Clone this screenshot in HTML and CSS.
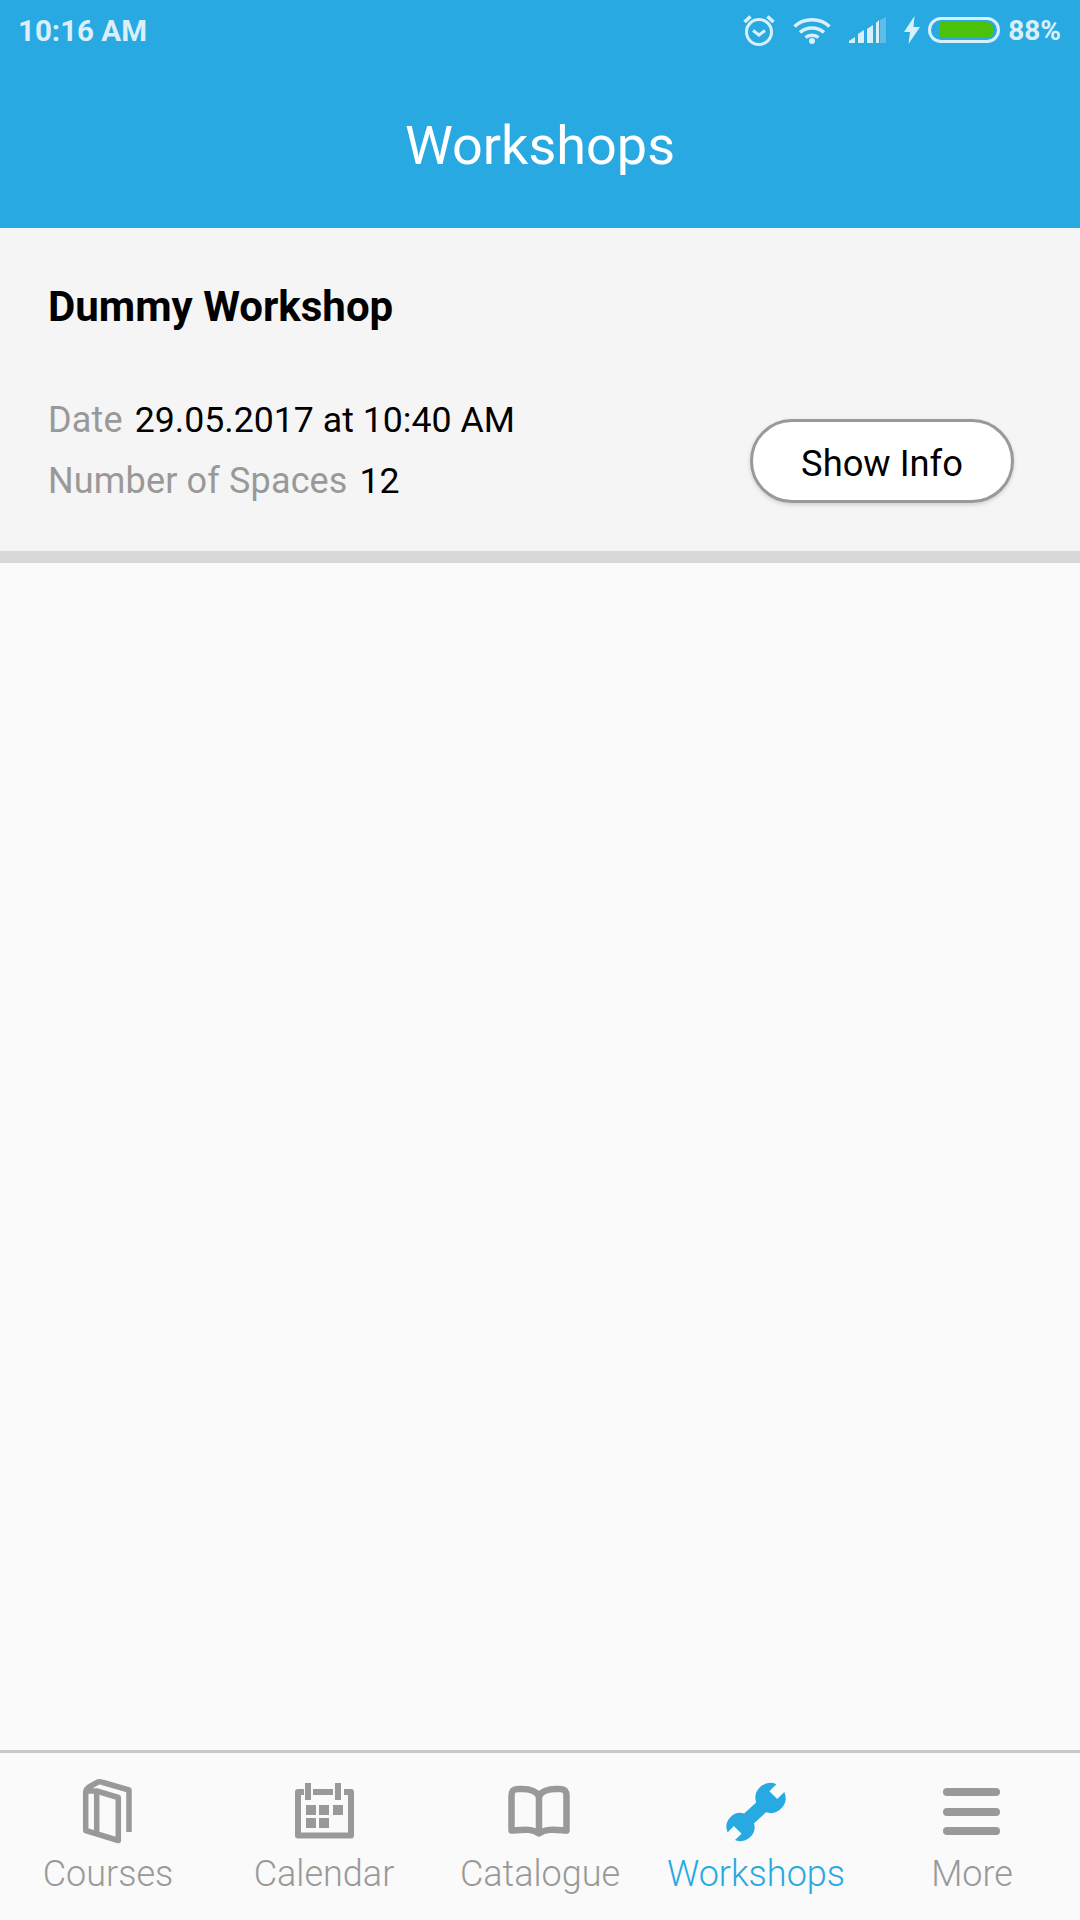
FILE: index.html
```html
<!DOCTYPE html>
<html lang="en">
<head>
    <meta charset="UTF-8">
    <meta name="viewport" content="width=device-width, initial-scale=1.0">
    <title>Workshops</title>
    <link rel="stylesheet" href="styles.css">
</head>
<body>
    <header class="app-header">
        <!-- status bar -->
        <div class="status-bar">
            <span class="status-time">10:16 AM</span>
            <div class="status-icons">
                <svg class="icon-alarm" viewBox="0 0 32 32" fill="none" stroke="#d9f0fb" stroke-width="3">
                    <circle cx="16" cy="18" r="12.5"/>
                    <path d="M10 16.500l6 4.500 6-4.500" stroke-width="3"/>
                    <path d="M1.500 8l6-5.500M30.500 8l-6-5.500" stroke-width="3.600"/>
                </svg>
                <svg class="icon-wifi" viewBox="0 0 38 27" fill="none" stroke="#d9f0fb" stroke-width="3.600">
                    <path d="M1.500 9.500C11 .5 27 .5 36.500 9.500"/>
                    <path d="M7 15.500c6.500-6 17.500-6 24 0"/>
                    <path d="M12.500 20.500c3.500-3 9.500-3 13 0"/>
                    <circle cx="19" cy="24" r="3" fill="#d9f0fb" stroke="none"/>
                </svg>
                <svg class="icon-signal" viewBox="0 0 37 26" fill="#d9f0fb">
                    <path d="M0 26v-2l6-4v6z"/>
                    <path d="M9 26v-9l6-4v13z"/>
                    <path d="M18 26V12l6-4v18z"/>
                    <path d="M27 26V6l3-3v23z"/>
                    <path d="M31 26V3l6-3v26z" opacity=".3"/>
                </svg>
                <svg class="icon-bolt" viewBox="0 0 16 28" fill="#d9f0fb">
                    <path d="M10.500 0L0 16h6L4.500 28 16 11H9.500z"/>
                </svg>
                <div class="battery"><div class="battery-fill"></div></div>
                <span class="status-percent">88%</span>
            </div>
        </div>
        <h1>Workshops</h1>
    </header>

    <main class="content">
        <section class="workshop-card">
            <h2>Dummy Workshop</h2>
            <div class="workshop-row">
                <div class="workshop-details">
                    <p><span class="detail-label">Date</span> <span class="detail-value">29.05.2017 at 10:40 AM</span></p>
                    <p><span class="detail-label">Number of Spaces</span> <span class="detail-value">12</span></p>
                </div>
                <button type="button" class="show-info">Show Info</button>
            </div>
        </section>
    </main>

    <!-- bottom tabs -->
    <nav class="tab-bar">
        <a class="tab" href="#">
            <svg viewBox="0 0 72 72" fill="none" stroke="currentColor" stroke-width="5.500" stroke-linejoin="round">
                <path d="M13.700 14Q14 11 17 9L26 4Q28 3.500 31 4.500L57 12V54"/>
                <path d="M14 13H24.700L46.300 19.500V62.500L13.700 52.500V13"/>
                <path d="M24.700 13V56"/>
            </svg>
            <span>Courses</span>
        </a>
        <a class="tab" href="#">
            <svg viewBox="0 0 72 72" fill="none" stroke="currentColor" stroke-width="6">
                <path d="M16 14h-6v43.500h53V14h-7M25 14h20" stroke-linejoin="round"/>
                <path d="M20 5v17M50 5v17"/>
                <g fill="currentColor" stroke="none">
                    <rect x="18" y="27" width="10" height="10"/>
                    <rect x="31" y="27" width="10" height="10"/>
                    <rect x="45" y="27" width="10" height="10"/>
                    <rect x="18" y="40" width="10" height="10"/>
                    <rect x="31" y="40" width="10" height="10"/>
                </g>
            </svg>
            <span>Calendar</span>
        </a>
        <a class="tab" href="#">
            <svg viewBox="0 0 72 72" fill="none" stroke="currentColor" stroke-width="6.500" stroke-linejoin="round">
                <path d="M35 18C32 13 26 11 18 11H14C9.500 11 7.500 13 7.500 18V52.500C17 52 28 50 35 55.500C42 50 53 52 62.500 52.500V18C62.500 13 60.500 11 56 11H52C44 11 38 13 35 18z"/>
                <path d="M35 18V55"/>
            </svg>
            <span>Catalogue</span>
        </a>
        <a class="tab tab-active" href="#">
            <svg viewBox="0 0 72 72" fill="currentColor">
                <path d="M56.400 6.200L49.400 13.300 57.200 21.100 64.300 14.100A15 15 0 0 1 46.050 34.350L34.050 45.350A14 14 0 0 1 15 61.900L21.600 55.700 13.800 47.900 7.600 54.500A14 14 0 0 1 24.150 35.450L36.150 24.450A15 15 0 0 1 56.400 6.200z"/>
            </svg>
            <span>Workshops</span>
        </a>
        <a class="tab" href="#">
            <svg viewBox="0 0 72 72" fill="currentColor">
                <rect x="7" y="10" width="57" height="8" rx="4"/>
                <rect x="7" y="30" width="57" height="8" rx="4"/>
                <rect x="7" y="49" width="57" height="8" rx="4"/>
            </svg>
            <span>More</span>
        </a>
    </nav>
</body>
</html>
```

FILE: styles.css
```css
body {
    font-family: Roboto, "Liberation Sans", sans-serif;
    background-color: #fafafa;
    margin: 0;
    padding: 0;
    min-height: 1920px;
    display: flex;
    flex-direction: column;
}

.app-header {
    background-color: #29a9e1;
    color: white;
    height: 228px;
}

.status-bar {
    display: flex;
    justify-content: space-between;
    align-items: center;
    height: 60px;
    padding: 0 19px 0 18px;
    color: #d9f0fb;
    font-size: 28px;
    font-weight: 700;
}

.status-time {
    font-size: 29.500px;
    margin-top: 2px;
}

.status-icons {
    display: flex;
    align-items: center;
}

.icon-alarm {
    width: 32px;
    height: 32px;
    margin-right: 18px;
}

.icon-wifi {
    width: 38px;
    height: 27px;
    margin-right: 18px;
}

.icon-signal {
    width: 37px;
    height: 26px;
    margin-right: 18px;
}

.icon-bolt {
    width: 16px;
    height: 28px;
    margin-right: 8px;
}

.battery {
    box-sizing: border-box;
    width: 72px;
    height: 26px;
    border: 3px solid #d9f0fb;
    border-radius: 13px;
    padding: 2px 3px 2px 8px;
    margin-right: 8px;
}

.battery-fill {
    height: 100%;
    background-color: #4cc10a;
    border-radius: 2px 8px 8px 2px;
}

.app-header h1 {
    margin: 0;
    text-align: center;
    font-size: 54px;
    font-weight: 400;
    line-height: 172px;
    height: 168px;
}

.content {
    flex: 1;
}

.workshop-card {
    box-sizing: border-box;
    height: 335px;
    padding: 51px 48px 0;
    background-color: #f5f5f5;
    border-bottom: 12px solid #d8d8d8;
}

.workshop-card h2 {
    margin: 0;
    font-size: 42px;
    font-weight: 700;
    line-height: 56px;
    color: #000;
}

.workshop-row {
    display: flex;
    justify-content: space-between;
    align-items: center;
    margin-top: 55px;
    padding-right: 18px;
}

.workshop-details p {
    margin: 0;
    font-size: 36px;
    line-height: 61px;
    color: #000;
}

.detail-label {
    color: #999;
    margin-right: 3px;
    letter-spacing: 0.15px;
}

.detail-value {
    font-size: 35.700px;
}

.show-info {
    box-sizing: border-box;
    width: 264px;
    height: 84px;
    margin-top: 20px;
    background: white;
    border: 3px solid #999;
    border-radius: 42px;
    box-shadow: 0 2px 4px rgba(0,0,0,0.15);
    font-family: inherit;
    font-size: 36.300px;
    color: #000;
    padding: 4px 0 0;
}

.tab-bar {
    display: grid;
    grid-template-columns: repeat(5, 216px);
    height: 170px;
    box-sizing: border-box;
    border-top: 3px solid #c8c8c8;
    background-color: #fafafa;
}

.tab {
    display: flex;
    flex-direction: column;
    align-items: center;
    padding-top: 25px;
    color: #999;
    text-decoration: none;
    font-size: 36px;
    font-weight: 300;
}

.tab svg {
    width: 72px;
    height: 72px;
}

.tab span {
    line-height: 40px;
    margin-top: 4px;
}

.tab-active {
    color: #29a9e1;
}
```
